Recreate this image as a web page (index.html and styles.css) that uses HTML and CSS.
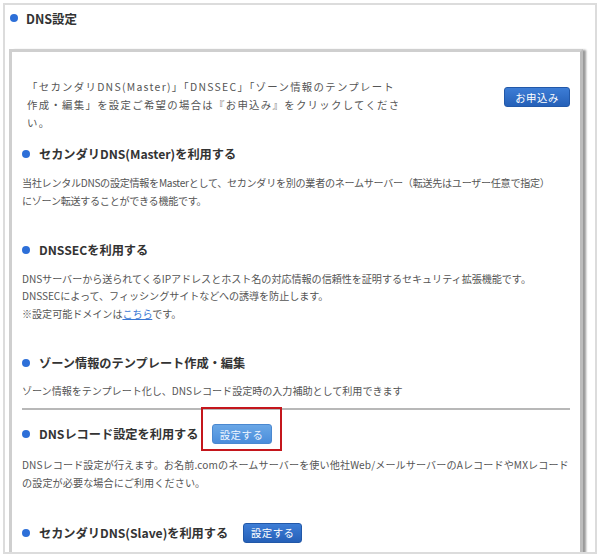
FILE: index.html
```html
<!DOCTYPE html>
<html lang="ja">
<head>
<meta charset="utf-8">
<title>DNS設定</title>
<link rel="stylesheet" href="styles.css">
</head>
<body>
<div class="outer">
  <div class="title"><span class="dot"></span>DNS設定</div>
  <div class="panel">
    <div class="intro">
      <p class="intro-text">「セカンダリDNS(Master)」「DNSSEC」「ゾーン情報のテンプレート<br>作成・編集」を設定ご希望の場合は『お申込み』をクリックしてくださ<br>い。</p>
      <a class="btn btn-dark btn-apply">お申込み</a>
    </div>

    <section class="sec sec-master">
      <h3 class="sec-h"><span class="dot"></span>セカンダリDNS(Master)を利用する</h3>
      <p class="desc desc-tight">当社レンタルDNSの設定情報をMasterとして、セカンダリを別の業者のネームサーバー（転送先はユーザー任意で指定）<br>にゾーン転送することができる機能です。</p>
    </section>

    <section class="sec sec-dnssec">
      <h3 class="sec-h"><span class="dot"></span>DNSSECを利用する</h3>
      <p class="desc">DNSサーバーから送られてくるIPアドレスとホスト名の対応情報の信頼性を証明するセキュリティ拡張機能です。<br>DNSSECによって、フィッシングサイトなどへの誘導を防止します。<br>※設定可能ドメインは<a class="link">こちら</a>です。</p>
    </section>

    <section class="sec sec-zone">
      <h3 class="sec-h"><span class="dot"></span>ゾーン情報のテンプレート作成・編集</h3>
      <p class="desc">ゾーン情報をテンプレート化し、DNSレコード設定時の入力補助として利用できます</p>
    </section>

    <hr class="rule">

    <section class="sec sec-record">
      <h3 class="sec-h"><span class="dot"></span>DNSレコード設定を利用する<span class="btn-wrap"><a class="btn btn-light">設定する</a><span class="highlight"></span></span></h3>
      <p class="desc desc-wide">DNSレコード設定が行えます。お名前.comのネームサーバーを使い他社Web/メールサーバーのAレコードやMXレコード<br>の設定が必要な場合にご利用ください。</p>
    </section>

    <section class="sec sec-slave">
      <h3 class="sec-h"><span class="dot"></span>セカンダリDNS(Slave)を利用する<a class="btn btn-dark btn-inline">設定する</a></h3>
    </section>
  </div>
</div>
</body>
</html>
```

FILE: styles.css
```css
* { box-sizing: border-box; }

html, body {
  margin: 0;
  padding: 0;
  background: #ffffff;
}

body {
  font-family: "Noto Sans CJK JP", "Noto Sans", sans-serif;
  color: #333333;
  width: 600px;
  height: 557px;
  overflow: hidden;
}

.outer {
  margin: 3px 0 0 3px;
  width: 594px;
  height: 551px;
  border: 2px solid #dcdcdc;
  padding-top: 3px;
  overflow: hidden;
}

.dot {
  display: inline-block;
  width: 8px;
  height: 8px;
  border-radius: 50%;
  background: #2d6fd8;
  flex: none;
}

.title {
  display: flex;
  align-items: center;
  gap: 8px;
  height: 20px;
  padding-left: 5px;
  font-size: 12.5px;
  font-weight: 700;
  color: #333;
}

.panel {
  margin: 21px 0 0 4px;
  width: 574px;
  height: 560px;
  border: 3px solid #cfcfcf;
  border-right-color: #bdbdbd;
  box-shadow: 4px 0 2px -1px #9a9a9a;
  padding: 26px 10px 0 10px;
}

.intro {
  display: flex;
  justify-content: space-between;
  align-items: flex-start;
}

.intro-text {
  margin: 0 0 0 5px;
  width: 390px;
  font-size: 10.4px;
  line-height: 18px;
  letter-spacing: 1.3px;
  color: #555;
}

.btn {
  display: inline-flex;
  align-items: center;
  justify-content: center;
  height: 20px;
  border-radius: 3px;
  font-size: 10.4px;
  color: #ffffff;
  letter-spacing: 0.5px;
  text-decoration: none;
  font-weight: 400;
}

.btn-dark {
  background: linear-gradient(#3d7dd6, #2560b8);
  border: 1px solid #2258a8;
}

.btn-light {
  background: linear-gradient(#6aa7e6, #4a8ddb);
  border: 1px solid #4a88d0;
  color: #eef5ff;
}

.btn-apply {
  width: 66px;
  margin-top: 9px;
}

.sec-h {
  margin: 0;
  display: flex;
  align-items: center;
  gap: 9px;
  height: 20px;
  font-size: 12.2px;
  font-weight: 700;
  color: #333;
}

.desc {
  margin: 0;
  font-size: 10.1px;
  line-height: 17.5px;
  letter-spacing: -0.05px;
  white-space: nowrap;
  color: #555;
}

.desc-tight {
  letter-spacing: -0.3px;
}

.desc-wide {
  letter-spacing: 0.1px;
}

.link {
  color: #3a78d4;
  text-decoration: underline;
}

.sec-master { margin-top: 12px; }
.sec-master .desc { margin-top: 10px; }

.sec-dnssec { margin-top: 31px; }
.sec-dnssec .desc { margin-top: 9.5px; }

.sec-zone { margin-top: 31px; }
.sec-zone .desc { margin-top: 8.5px; }

.rule {
  margin: 9px 0 0 0;
  border: 0;
  border-top: 2px solid #b8b8b8;
  height: 0;
}

.sec-record { margin-top: 14px; }
.sec-record .desc { margin-top: 12px; }

.btn-wrap {
  position: relative;
  margin-left: 4px;
  display: inline-flex;
}

.btn-wrap .btn {
  width: 60px;
}

.highlight {
  position: absolute;
  left: -11px;
  top: -17px;
  width: 81px;
  height: 44px;
  border: 2px solid #c4161c;
}

.sec-slave { margin-top: 31.5px; }

.btn-inline {
  width: 59px;
  margin-left: 6px;
}
```
